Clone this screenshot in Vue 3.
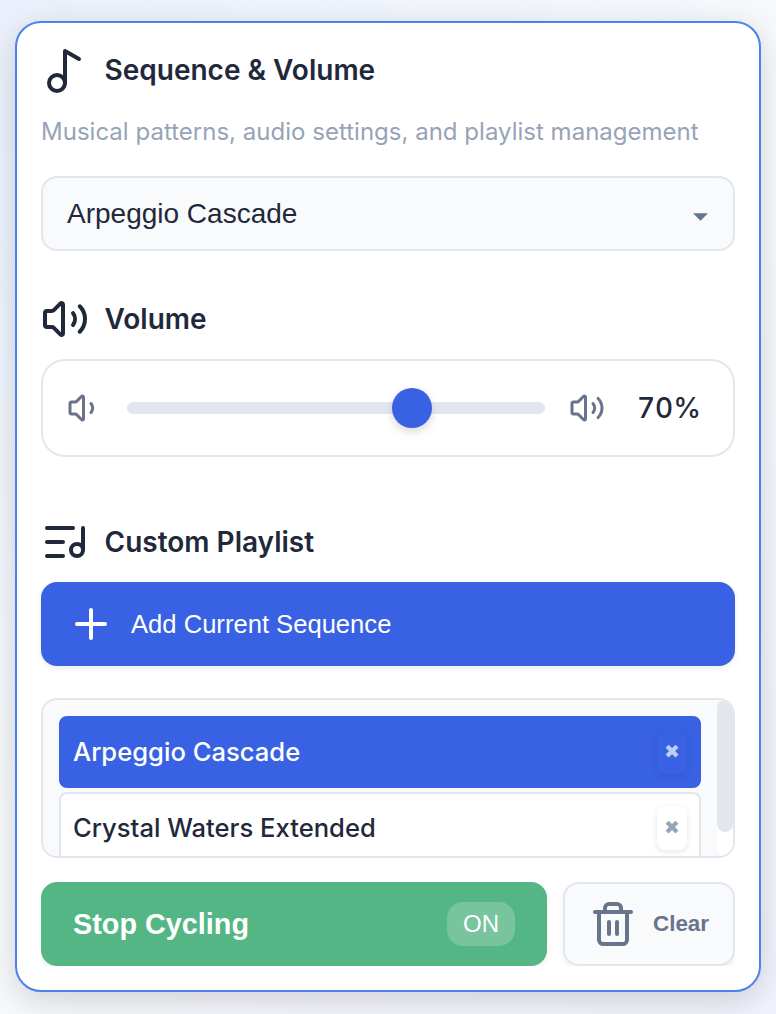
<script setup>
import { ref } from 'vue'

const volume = ref(70)
const playlist = ref([
  { name: 'Arpeggio Cascade', active: true },
  { name: 'Crystal Waters Extended', active: false },
])
const speaker =
  'M11 4.702a.705.705 0 0 0-1.203-.498L6.413 7.587A1.4 1.4 0 0 1 5.416 8H3a1 1 0 0 0-1 1v6a1 1 0 0 0 1 1h2.416a1.4 1.4 0 0 1 .997.413l3.383 3.384A.705.705 0 0 0 11 19.298z'
</script>

<template>
  <main class="page">
    <section class="card">
      <header class="heading heading-main">
        <svg class="icon" viewBox="0 0 24 24"><circle cx="8" cy="18" r="4" /><path d="M12 18V2l7 4" /></svg>
        <h2>Sequence &amp; Volume</h2>
      </header>
      <p class="subtitle">Musical patterns, audio settings, and playlist management</p>

      <div class="select">
        <span>Arpeggio Cascade</span>
        <svg class="caret" viewBox="0 0 16 8"><path d="M0 0h16L8 8z" /></svg>
      </div>

      <header class="heading heading-volume">
        <svg class="icon" viewBox="0 0 24 24">
          <path :d="speaker" /><path d="M16 9a5 5 0 0 1 0 6" /><path d="M19.364 18.364a9 9 0 0 0 0-12.728" />
        </svg>
        <h2>Volume</h2>
      </header>
      <div class="volume">
        <svg class="icon small" viewBox="0 0 24 24"><path :d="speaker" /><path d="M16 9a5 5 0 0 1 0 6" /></svg>
        <div class="track">
          <div class="thumb" :style="{ left: `calc((100% - 40px) * ${volume / 100})` }"></div>
        </div>
        <svg class="icon small" viewBox="0 0 24 24">
          <path :d="speaker" /><path d="M16 9a5 5 0 0 1 0 6" /><path d="M19.364 18.364a9 9 0 0 0 0-12.728" />
        </svg>
        <span class="percent">{{ volume }}%</span>
      </div>

      <header class="heading heading-playlist">
        <svg class="icon" viewBox="0 0 24 24">
          <path d="M16 5H3M11 12H3M11 19H3M21 16V5" /><circle cx="18" cy="16" r="3" />
        </svg>
        <h2>Custom Playlist</h2>
      </header>
      <button class="add">
        <svg class="icon" viewBox="0 0 24 24"><path d="M5 12h14M12 5v14" /></svg>
        <span>Add Current Sequence</span>
      </button>

      <div class="playlist">
        <div class="items">
          <div v-for="item in playlist" :key="item.name" class="item" :class="{ active: item.active }">
            <span class="name">{{ item.name }}</span>
            <button class="remove">✖</button>
          </div>
        </div>
        <div class="scrollbar"><div class="scroll-thumb"></div></div>
      </div>

      <div class="actions">
        <button class="cycle">
          <span>Stop Cycling</span>
          <span class="state">ON</span>
        </button>
        <button class="clear">
          <svg class="icon" viewBox="0 0 24 24">
            <path d="M3 6h18M19 6v14c0 1-1 2-2 2H7c-1 0-2-1-2-2V6M8 6V4c0-1 1-2 2-2h4c1 0 2 1 2 2v2M10 11v6M14 11v6" />
          </svg>
          <span>Clear</span>
        </button>
      </div>
    </section>
  </main>
</template>

<style>
body { margin: 0; }
</style>

<style scoped>
* { box-sizing: border-box; }
.page {
  height: 1014px;
  padding: 21px 15px 22px;
  overflow: hidden;
  background: linear-gradient(135deg, #ebf0fc 0%, #f8fafc 50%, #f2f2fc 100%);
  font-family: Inter, "Liberation Sans", sans-serif;
  color: #1f293b;
}
.card {
  height: 971px;
  padding: 24px;
  border: 2px solid #4b82ee;
  border-radius: 26px;
  background: #fff;
  box-shadow: 0 8px 32px rgba(0, 0, 0, 0.16);
}
.heading { display: flex; align-items: center; gap: 16px; height: 48px; }
h2 { margin: 0 0 0 -0.5px; font-size: 28px; font-weight: 600; line-height: 34px; }
.heading-main h2 { margin-bottom: 2px; }
.icon {
  flex: none;
  width: 48px;
  height: 48px;
  fill: none;
  stroke: currentColor;
  stroke-width: 2;
  stroke-linecap: round;
  stroke-linejoin: round;
}
.icon.small { width: 36px; height: 36px; color: #67748b; }
.subtitle { margin: 20px 0 0; color: #97a3b7; font-size: 24px; line-height: 34px; letter-spacing: 0.015px; white-space: nowrap; }
.select {
  display: flex;
  align-items: center;
  justify-content: space-between;
  height: 75px;
  margin-top: 27px;
  padding: 0 25px 0 24px;
  border: 2px solid #e2e7ee;
  border-radius: 16px;
  background: #f9fafc;
  font-family: "Liberation Sans", Arial, sans-serif;
  font-size: 28px;
}
.caret { width: 15px; height: 8px; margin-top: 6px; fill: #67748b; }
.heading-volume { margin-top: 44px; }
.volume {
  display: flex;
  align-items: center;
  gap: 24px;
  height: 98px;
  margin-top: 16px;
  padding: 0 24px;
  border: 2px solid #e2e7ee;
  border-radius: 24px;
}
.track { position: relative; flex: 1; height: 12px; border-radius: 6px; background: #e2e7ee; }
.thumb {
  position: absolute;
  top: -14px;
  width: 40px;
  height: 40px;
  border-radius: 50%;
  background: #3862e3;
  box-shadow: 0 4px 8px rgba(0, 0, 0, 0.15);
}
.percent { width: 80px; text-align: center; font-size: 28px; font-weight: 500; font-variant-numeric: tabular-nums; }
.heading-playlist { margin-top: 61px; }
button { margin: 0; border: 0; font-family: "Liberation Sans", Arial, sans-serif; }
.add {
  display: flex;
  align-items: center;
  gap: 16px;
  width: 100%;
  height: 84px;
  margin-top: 16px;
  padding: 0 26px;
  border-radius: 16px;
  background: #3862e3;
  color: #fff;
  font-size: 25.6px;
  box-shadow: 0 2px 6px rgba(0, 0, 0, 0.08);
}
.playlist {
  display: flex;
  height: 160px;
  margin-top: 32px;
  border: 2px solid #e2e7ee;
  border-radius: 16px;
  background: #f9fafc;
  overflow: hidden;
}
.items { flex: 1; padding: 16px; }
.item {
  display: flex;
  align-items: center;
  justify-content: space-between;
  height: 72px;
  margin-bottom: 4px;
  padding: 0 12px;
  border: 2px solid #e2e7ee;
  border-radius: 8px;
  background: #fff;
  font-size: 25.6px;
  font-weight: 500;
}
.name { padding-bottom: 1px; }
.item.active { border-color: #3862e3; background: #3862e3; color: #fff; }
.remove {
  width: 30px;
  height: 44px;
  padding: 0 0 2px;
  border-radius: 8px;
  background: #fff;
  color: #97a3b7;
  font-family: "DejaVu Sans", sans-serif;
  font-size: 19px;
  line-height: 20px;
  box-shadow: 0 2px 6px rgba(0, 0, 0, 0.1);
}
.active .remove { background: #3862e3; color: #bfcdf7; }
.scrollbar { width: 16px; border-radius: 8px; background: #fff; }
.scroll-thumb { height: 132px; border-radius: 8px; background: #e2e7ee; }
.actions { display: flex; gap: 16px; margin-top: 24px; overflow: hidden; }
.cycle {
  display: flex;
  flex: 1;
  align-items: center;
  justify-content: space-between;
  height: 84px;
  padding: 0 32px;
  border-radius: 16px;
  background: #55b685;
  color: #fff;
  font-size: 28.8px;
  font-weight: 700;
  box-shadow: 0 2px 6px rgba(0, 0, 0, 0.08);
}
.state {
  display: grid;
  place-items: center;
  width: 68px;
  height: 44px;
  border-radius: 16px;
  background: rgba(255, 255, 255, 0.2);
  font-size: 24px;
  font-weight: 400;
}
.clear {
  display: flex;
  align-items: center;
  gap: 16px;
  width: 172px;
  height: 84px;
  padding: 0 24px;
  border: 2px solid #e2e7ee;
  border-radius: 16px;
  background: #f9fafc;
  color: #67748b;
  font-size: 22.4px;
  font-weight: 700;
  box-shadow: 0 2px 6px rgba(0, 0, 0, 0.08);
}
</style>
